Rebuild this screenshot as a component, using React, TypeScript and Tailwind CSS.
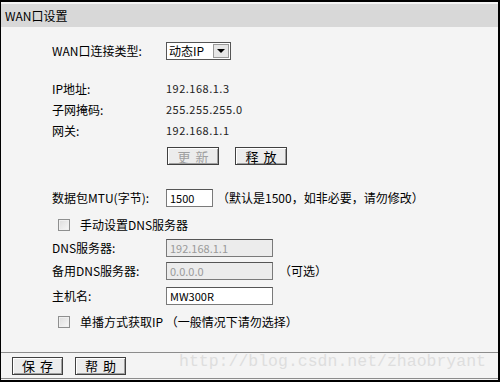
import React from "react";

const font = { fontFamily: '"SimSun", "Noto Sans CJK SC", "Liberation Sans", sans-serif' };

function Checkbox() {
  return (
    <span className="inline-block w-[12px] h-[12px] border border-[#8e8f8f] bg-gradient-to-br from-[#dcdcdc] to-[#f8f8f8] shadow-[inset_0_0_0_1px_#f0f0f0]" />
  );
}

function Btn({ label, disabled }: { label: string; disabled?: boolean }) {
  return (
    <button
      className={`h-[18px] w-full border border-[#404040] bg-[#ececec] shadow-[inset_1px_1px_0_#fff,inset_-1px_-1px_0_#a0a0a0] text-[13px] leading-none tracking-[5px] pl-[5px] ${
        disabled ? "text-[#a0a0a0] border-[#8a8a8a]" : "text-black"
      }`}
      style={font}
    >
      {label}
    </button>
  );
}

function Field({ value, w, disabled }: { value: string; w: string; disabled?: boolean }) {
  return (
    <div
      className={`h-[18px] ${w} border border-[#7a7a7a] border-t-[#555] flex items-center px-[3px] text-[11px] ${
        disabled ? "bg-[#ececec] text-[#9a9a9a]" : "bg-white text-black"
      }`}
    >
      {value}
    </div>
  );
}

export default function App() {
  const label = "w-[114px] shrink-0";
  return (
    <div
      className="w-[500px] h-[382px] bg-[#f4f4f4] border-2 border-black border-l border-r-2 flex flex-col text-[12px] text-black overflow-hidden"
      style={font}
    >
      {/* Title */}
      <div className="mt-[2px] h-[23px] bg-[#d8d8d8] flex items-center pl-[4px] text-[12px]">WAN口设置</div>

      {/* Form */}
      <div className="pl-[51px] flex flex-col">
        <div className="mt-[15px] h-[18px] flex items-center">
          <span className={label}>WAN口连接类型:</span>
          <div className="h-[18px] w-[65px] border border-[#555] bg-white flex items-center">
            <span className="flex-1 pl-[2px] text-[12px]">动态IP</span>
            <span className="w-[16px] h-[14px] mr-[1px] border border-[#999] bg-[#e6e6e6] flex items-center justify-center">
              <span className="w-0 h-0 border-l-[4px] border-r-[4px] border-t-[4px] border-l-transparent border-r-transparent border-t-black" />
            </span>
          </div>
        </div>

        <div className="mt-[18px] h-[21px] flex items-center">
          <span className={label}>IP地址:</span>
          <span className="text-[11px] text-[#222] tracking-[0.5px]">192.168.1.3</span>
        </div>
        <div className="h-[21px] flex items-center">
          <span className={label}>子网掩码:</span>
          <span className="text-[11px] text-[#222] tracking-[0.5px]">255.255.255.0</span>
        </div>
        <div className="h-[21px] flex items-center">
          <span className={label}>网关:</span>
          <span className="text-[11px] text-[#222] tracking-[0.5px]">192.168.1.1</span>
        </div>
        <div className="mt-[6px] h-[18px] flex items-center pl-[115px] gap-[16px]">
          <span className="w-[52px] flex"><Btn label="更新" disabled /></span>
          <span className="w-[52px] flex"><Btn label="释放" /></span>
        </div>

        <div className="mt-[24px] h-[18px] flex items-center">
          <span className={label}>数据包MTU(字节):</span>
          <Field value="1500" w="w-[47px]" />
          <span className="ml-[4px]">（默认是1500，如非必要，请勿修改）</span>
        </div>

        <div className="mt-[9px] h-[18px] flex items-center pl-[6px] gap-[10px]">
          <Checkbox />
          <span>手动设置DNS服务器</span>
        </div>

        <div className="mt-[5px] h-[18px] flex items-center">
          <span className={label}>DNS服务器:</span>
          <Field value="192.168.1.1" w="w-[107px]" disabled />
        </div>
        <div className="mt-[5px] h-[18px] flex items-center">
          <span className={label}>备用DNS服务器:</span>
          <Field value="0.0.0.0" w="w-[107px]" disabled />
          <span className="ml-[6px]">（可选）</span>
        </div>
        <div className="mt-[7px] h-[18px] flex items-center">
          <span className={label}>主机名:</span>
          <Field value="MW300R" w="w-[107px]" />
        </div>

        <div className="mt-[8px] h-[18px] flex items-center pl-[6px] gap-[10px]">
          <Checkbox />
          <span>单播方式获取IP （一般情况下请勿选择）</span>
        </div>
      </div>

      {/* Footer */}
      <div className="mt-auto border-t border-[#8c8c8c] border-b h-[27px] flex items-center pl-[11px] gap-[12px] relative">
        <span className="w-[51px] flex"><Btn label="保存" /></span>
        <span className="w-[51px] flex"><Btn label="帮助" /></span>
        <span
          className="absolute left-[178px] top-[1px] text-[16.5px] text-[#dedede] leading-none"
          style={{ fontFamily: '"Liberation Mono", monospace' }}
        >
          http://blog.csdn.net/zhaobryant
        </span>
      </div>
      <div className="h-[1px]" />
    </div>
  );
}
